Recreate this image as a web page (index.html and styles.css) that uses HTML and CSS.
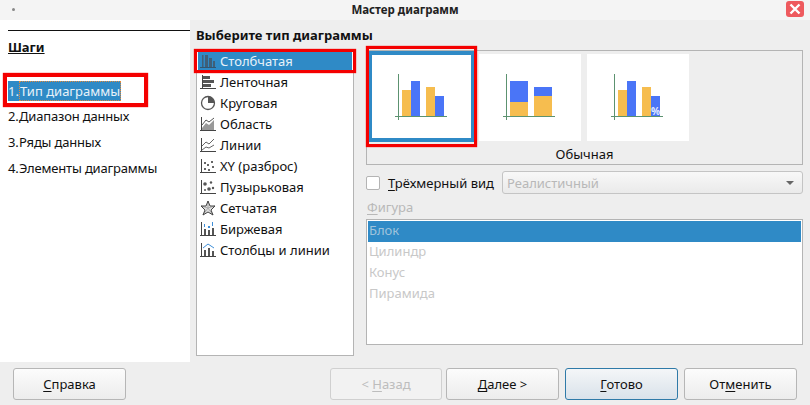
FILE: index.html
```html
<!DOCTYPE html>
<html lang="ru">
<head>
<meta charset="utf-8">
<title>Мастер диаграмм</title>
<link rel="stylesheet" href="styles.css">
</head>
<body>
<svg class="defs" width="0" height="0" aria-hidden="true">
  <symbol id="chart-a" viewBox="0 0 102 87">
    <path d="M27.500 20V66M24 62.500H76" fill="none" stroke="#5c9270" stroke-width="1"/>
    <path d="M31 36h9v26h-9zM55 33h9v29h-9z" fill="#f6bd4f"/>
    <path d="M40 27h9v35h-9zM64 42h9v20h-9z" fill="#4a75f7"/>
  </symbol>
  <symbol id="chart-b" viewBox="0 0 102 87">
    <path d="M27.500 20V66M24 62.500H76" fill="none" stroke="#5c9270" stroke-width="1"/>
    <path d="M31 27h18v21H31zM55 33h18v9H55z" fill="#4a75f7"/>
    <path d="M31 48h18v14H31zM55 42h18v20H55z" fill="#f6bd4f"/>
  </symbol>
</svg>
<div class="window">
  <header class="titlebar">
    <span class="dot"></span>
    <span class="title">Мастер диаграмм</span>
    <span class="close"><svg width="12" height="12" viewBox="0 0 12 12"><path d="M1.500 1.500l9 9M10.500 1.500l-9 9" stroke="#fff" stroke-width="2.400"/></svg></span>
  </header>
  <main class="main">
    <aside class="side">
      <h2 class="side-title">Шаги</h2>
      <ol class="steps">
        <li class="step current"><span class="num">1.</span><span class="focus">Тип диаграммы</span></li>
        <li class="step"><span class="num">2.</span>Диапазон данных</li>
        <li class="step"><span class="num">3.</span>Ряды данных</li>
        <li class="step"><span class="num">4.</span>Элементы диаграммы</li>
      </ol>
      <div class="mark mark-step"></div>
    </aside>
    <section class="content">
      <h1 class="heading">Выберите тип диаграммы</h1>
      <div class="columns">
        <div class="types-wrap">
          <ul class="types">
            <li class="type selected"><svg class="ico" viewBox="0 0 16 16"><path d="M0 14.500h16" stroke="#33556f" fill="none"/><path d="M2 2h1.500v12H2zM5 2h3v12H5zM9 5h3v9H9zM13 8h2v6h-2z" fill="#3f5f78"/></svg>Столбчатая</li>
            <li class="type"><svg class="ico" viewBox="0 0 16 16"><path d="M2.500 1v14M0 14.500h16" stroke="#444" fill="none"/><path d="M3 2h7v3H3zM3 6h11v3H3zM3 10h8v3H3z" fill="#555"/></svg>Ленточная</li>
            <li class="type"><svg class="ico" viewBox="0 0 16 16"><circle cx="8" cy="8" r="6.500" fill="#fff" stroke="#555" stroke-width="1.300"/><path d="M8 8V1.500A6.500 6.500 0 0 1 14.500 8z" fill="#555"/></svg>Круговая</li>
            <li class="type"><svg class="ico" viewBox="0 0 16 16"><path d="M1.500 1v14M0 14.500h16" stroke="#444" fill="none"/><path d="M2 12l4-5 3 2 5-5v10H2z" fill="#999"/><path d="M2 9l4-5 3 2 5-4" stroke="#555" fill="none"/></svg>Область</li>
            <li class="type"><svg class="ico" viewBox="0 0 16 16"><path d="M1.500 1v14M0 14.500h16" stroke="#444" fill="none"/><path d="M2 9l4-4 3 2 5-5M2 13l4-3 3 1 5-3" stroke="#666" fill="none"/></svg>Линии</li>
            <li class="type"><svg class="ico" viewBox="0 0 16 16"><path d="M1.500 1v14M0 14.500h16" stroke="#444" fill="none"/><path d="M4 10h2v2H4zM7 6h2v2H7zM8 11h2v2H8zM11 3h2v2h-2zM12 8h2v2h-2zM4 4h2v2H4z" fill="#666"/></svg>XY (разброс)</li>
            <li class="type"><svg class="ico" viewBox="0 0 16 16"><path d="M1.500 1v14M0 14.500h16" stroke="#444" fill="none"/><circle cx="5" cy="5" r="1.800" fill="#555"/><circle cx="11" cy="3.500" r="1.200" fill="#555"/><circle cx="9" cy="10" r="1.800" fill="#555"/><circle cx="13" cy="9" r="1.200" fill="#555"/><circle cx="5" cy="11" r="1" fill="#555"/></svg>Пузырьковая</li>
            <li class="type"><svg class="ico" viewBox="0 0 16 16"><path d="M8 1v7M1 6l7 2 7-2M3 15l5-7 5 7" stroke="#999" fill="none"/><path d="M8 1l2 5h5l-4 4 2 5-5-3-5 3 2-5-4-4h5z" fill="#bbb" fill-opacity=".5" stroke="#444"/></svg>Сетчатая</li>
            <li class="type"><svg class="ico" viewBox="0 0 16 16"><path d="M1.500 1v14M0 14.500h16" stroke="#444" fill="none"/><path d="M4 8h2v6H4zM8 9h2v5H8zM12 7h2v7h-2z" fill="#555"/><path d="M4 3h1v3H4zM8 5h2v2H8zM12 1h1v4h-1z" fill="#3f8fd8"/></svg>Биржевая</li>
            <li class="type"><svg class="ico" viewBox="0 0 16 16"><path d="M1.500 1v14M0 14.500h16" stroke="#444" fill="none"/><path d="M4 8h2v6H4zM8 6h2v8H8zM12 9h2v5h-2z" fill="#555"/><path d="M3 6l5-4 6 4" stroke="#3f8fd8" fill="none"/></svg>Столбцы и линии</li>
          </ul>
          <div class="mark mark-type"></div>
        </div>
        <div class="right">
          <div class="subtypes">
            <div class="thumbs">
              <div class="thumb active"><svg class="chart" viewBox="0 0 102 87"><use href="#chart-a"/></svg></div>
              <div class="thumb"><svg class="chart" viewBox="0 0 102 87"><use href="#chart-b"/></svg></div>
              <div class="thumb"><svg class="chart" viewBox="0 0 102 87"><use href="#chart-a"/></svg><span class="pct">%</span></div>
            </div>
            <div class="sub-label">Обычная</div>
            <div class="mark mark-thumb"></div>
          </div>
          <div class="three-d">
            <span class="check"></span>
            <span class="check-label"><u>Т</u>рёхмерный вид</span>
            <div class="select"><span>Реалистичный</span><span class="caret"></span></div>
          </div>
          <div class="shape-label"><u>Ф</u>игура</div>
          <ul class="shapes">
            <li class="shape selected">Блок</li>
            <li class="shape">Цилиндр</li>
            <li class="shape">Конус</li>
            <li class="shape">Пирамида</li>
          </ul>
        </div>
      </div>
    </section>
  </main>
  <footer class="footer">
    <button class="btn help"><u>С</u>правка</button>
    <span class="spacer"></span>
    <button class="btn back disabled">&lt; <u>Н</u>азад</button>
    <button class="btn next"><u>Д</u>алее &gt;</button>
    <button class="btn primary"><u>Г</u>отово</button>
    <button class="btn">От<u>м</u>енить</button>
  </footer>
</div>
</body>
</html>
```

FILE: styles.css
```css
* { box-sizing: border-box; }
html, body { margin: 0; padding: 0; }
body { width: 810px; height: 405px; overflow: hidden; font-family: "Noto Sans", "Open Sans", sans-serif; font-size: 13px; color: #111; background: #eee; }
.defs { position: absolute; }
ul, ol { list-style: none; margin: 0; padding: 0; }
h1, h2 { margin: 0; }
u { text-underline-offset: 2px; }
.window { display: flex; flex-direction: column; width: 810px; height: 405px; }

.titlebar { position: relative; display: flex; align-items: center; justify-content: center; flex: 0 0 20px; background: #f4f4f4; }
.title { font-size: 11.500px; font-weight: 700; color: #222; line-height: 18px; }
.dot { position: absolute; left: 12px; top: 8px; width: 3px; height: 3px; border-radius: 50%; background: #888; }
.close { position: absolute; left: 786px; top: 1px; display: flex; align-items: center; justify-content: center; width: 18px; height: 16px; border-radius: 3px; background: #ee5a5e; }

.main { display: flex; flex: 0 0 342px; }
.side { position: relative; flex: 0 0 190px; margin: 0; padding: 10px 0 0 8px; background: #fff; }
.side::before { content: ""; display: block; height: 1px; background: #111; }
.side-title { margin-top: 7px; font-size: 13px; line-height: 18px; font-weight: 700; text-decoration: underline; }
.steps { margin-top: 25px; }
.step { display: flex; height: 26px; line-height: 20px; white-space: nowrap; letter-spacing: -0.180px; }
.num { flex: 0 0 11px; }
.step.current { width: 113px; height: 25px; color: #e8f2f9; letter-spacing: 0; }
.step.current .num, .step.current .focus { display: block; height: 20px; background: #2f8ac6; }
.focus { flex: 1; padding-left: 1px; outline: 1px dotted #e08a3c; outline-offset: -1px; }

.content { flex: 1; padding: 5px 7px 0 6px; min-width: 0; }
.heading { font-size: 13px; line-height: 20px; font-weight: 700; }
.columns { display: flex; gap: 12px; margin-top: 5px; }
.types-wrap { position: relative; flex: 0 0 158px; }
.types { height: 306px; padding: 0 1px; border: 1px solid #b4b4b4; background: #fff; }
.type { display: flex; align-items: center; gap: 4px; height: 21px; line-height: 20px; padding: 0 0 2px 2px; white-space: nowrap; }
.type.selected { background: #2f8ac6; color: #e8f2f9; }
.ico { flex: 0 0 16px; width: 16px; height: 16px; }

.right { flex: 0 0 437px; }
.subtypes { position: relative; height: 115px; border: 1px solid #b4b4b4; }
.thumbs { display: flex; gap: 6px; padding: 3px 0 0 4px; }
.thumb { position: relative; flex: 0 0 102px; height: 87px; background: #fff; }
.thumb.active::before { content: ""; position: absolute; left: -3px; right: -2px; top: -3px; bottom: -1px; border: 4px solid #2f8ac6; }
.chart { display: block; width: 102px; height: 87px; }
.pct { position: absolute; left: 64px; top: 50px; font-size: 10px; line-height: 14px; font-weight: 700; color: #e4ecff; }
.sub-label { text-align: center; line-height: 18px; margin-top: 4px; }

.mark { position: absolute; border: 3px solid #f40000; box-shadow: 0 0 1px #f40000; pointer-events: none; }
.mark-step { left: 3px; top: 53px; width: 145px; height: 34px; border-width: 4px; }
.mark-type { left: -2px; top: -1px; width: 162px; height: 24px; }
.mark-thumb { left: -1px; top: -5px; width: 111px; height: 101px; }

.three-d { display: flex; align-items: center; height: 23px; margin-top: 6px; }
.check { flex: 0 0 14px; height: 14px; border: 1px solid #b4b4b4; border-radius: 2px; background: #fff; }
.check-label { margin-left: 8px; flex: 0 0 114px; white-space: nowrap; }
.select { display: flex; align-items: center; justify-content: space-between; flex: 1; height: 23px; padding: 0 6px 0 4px; border: 1px solid #c4c4c4; border-radius: 3px; background: linear-gradient(#f8f8f8, #eaeaea); color: #b8b8b8; }
.caret { width: 0; height: 0; border: 4px solid transparent; border-top: 4px solid #666; border-bottom: 0; margin-right: 2px; }
.shape-label { height: 25px; padding-left: 1px; line-height: 26px; color: #b8b8b8; }
.shapes { height: 126px; padding: 1px; border: 1px solid #b4b4b4; background: #fff; }
.shape { height: 21px; padding-left: 1px; line-height: 18px; color: #c8c8c8; }
.shape.selected { background: #2f8ac6; color: #9fc3dc; }

.footer { display: flex; flex: 1; padding: 6px 13px 0; gap: 4px; align-items: flex-start; }
.btn { flex: 0 0 113px; height: 32px; margin: 0; padding: 0; border: 1px solid #b6b6b6; border-radius: 3px; background: linear-gradient(#fcfcfc, #ececec); font: inherit; color: #111; }
.spacer { flex: 0 0 196px; }
.back { flex-basis: 112px; }
.disabled { color: #bdbdbd; border-color: #d0d0d0; background: #f2f2f2; }
.next { margin-right: 2px; }
.primary { margin-right: 2px; border-color: #2f7aa8; background: linear-gradient(#f4f6f8, #d9e2ea); }
```
